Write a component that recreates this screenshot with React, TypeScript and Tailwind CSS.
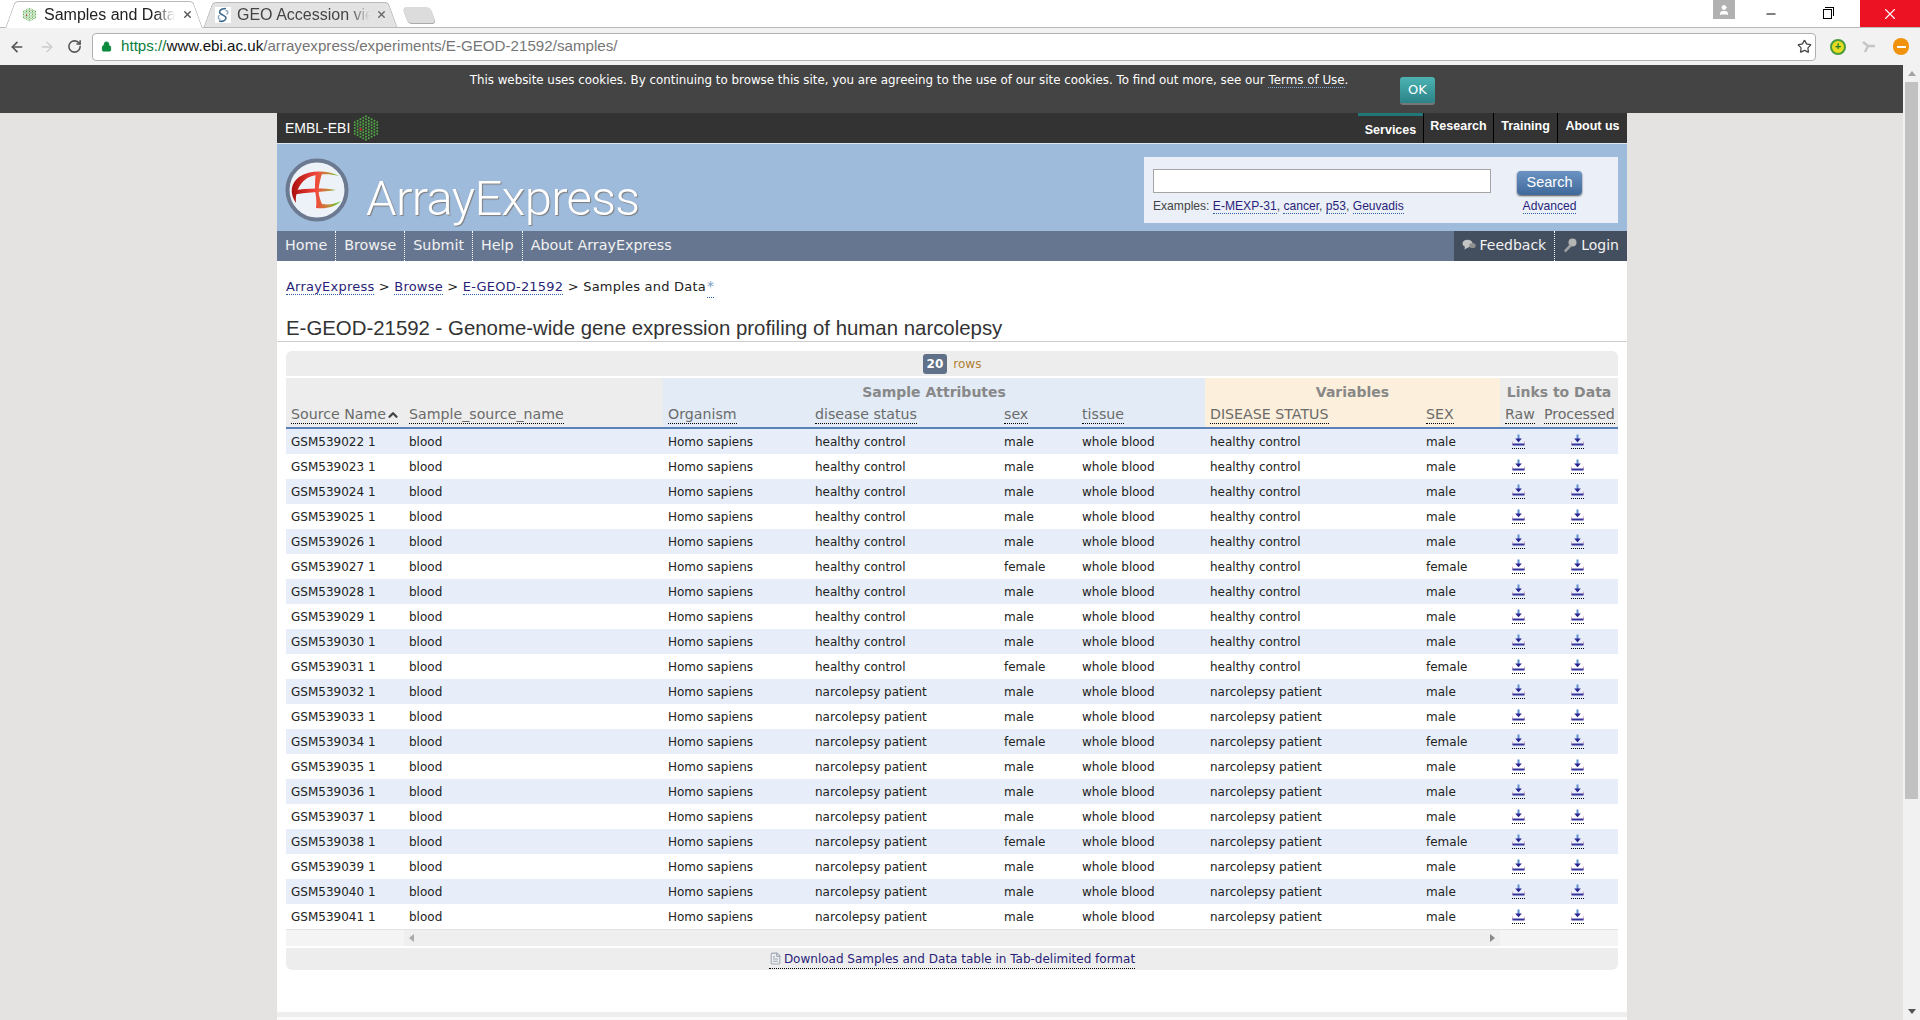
import { ChevronUp, ArrowLeft, ArrowRight, RotateCw, Lock, Star, Minus, X, User, FileText } from "lucide-react"

const verdana = "font-['DejaVu_Sans',Verdana,sans-serif]"
const arial = "font-['Liberation_Sans',Arial,sans-serif]"

interface Sample {
  id: number
  status: string
  sex: string
}

const femaleIds = [539027, 539031, 539034, 539038]

const samples: Sample[] = Array.from({ length: 20 }, (_, i) => {
  const id = 539022 + i
  return {
    id,
    status: i < 10 ? "healthy control" : "narcolepsy patient",
    sex: femaleIds.includes(id) ? "female" : "male",
  }
})

function HexLogo({ size = 26 }: { size?: number }) {
  const dots: [number, number][] = []
  for (let c = -4; c <= 4; c++) {
    const n = 9 - Math.abs(c)
    for (let r = 0; r < n; r++) {
      dots.push([13 + c * 2.6, 13 + (r - (n - 1) / 2) * 2.7])
    }
  }
  return (
    <svg width={size} height={size} viewBox="0 0 26 26">
      {dots.map(([x, y], i) => (
        <circle key={i} cx={x} cy={y} r="0.95" fill="#52a544" />
      ))}
      <circle cx="8" cy="14.4" r="1.1" fill="#d2142a" />
    </svg>
  )
}

function AeLogo() {
  return (
    <svg width="64" height="64" viewBox="0 0 64 64">
      <defs>
        <linearGradient id="ae" gradientUnits="userSpaceOnUse" x1="6" x2="56" y1="0" y2="0">
          <stop offset="0" stopColor="#a80c0c" />
          <stop offset="0.5" stopColor="#f2463a" />
          <stop offset="0.78" stopColor="#b8963a" />
          <stop offset="1" stopColor="#3fd21c" />
        </linearGradient>
      </defs>
      <circle cx="32" cy="32" r="29.5" fill="#edf2f9" stroke="#6b7a90" strokeWidth="4" />
      <path d="M11 45 C4 35 6 25 14 19 C25 12 42 12 54 18 C42 15 28 16 21 21 C14 26 10 35 11 45 Z" fill="url(#ae)" />
      <path d="M8 33 C20 30 38 30 51 32 C38 34 20 34 8 37 Z" fill="url(#ae)" />
      <path d="M31 15 L37 16 C35 22 33 30 34 37 C35 41 36 44 37 46 C44 47 50 46 56 43 C50 49 42 51 31 50 C32 44 31 38 30 32 C30 26 30 20 31 15 Z" fill="url(#ae)" />
    </svg>
  )
}

function GeoIcon() {
  return (
    <svg width="16" height="16" viewBox="0 0 16 16" className="shrink-0 bg-white">
      <path d="M11 1.5 C5 1.5 3 5 6 7 C9 9 13 10 10 13 C8.5 14.5 6 14.5 4 14" fill="none" stroke="#3f6b8f" strokeWidth="1.6" />
      <path d="M4.5 8 C2.5 10 3 12.5 5.5 12 M11.5 7.5 C13.5 6 13.5 3.5 10.5 3.5" fill="none" stroke="#8aa6bc" strokeWidth="1.3" />
    </svg>
  )
}

function DownloadIcon() {
  return (
    <a className="inline-block border-b border-dotted border-black pb-[2px] leading-none">
      <svg width="13" height="12" viewBox="0 0 13 12" className="block">
        <path d="M6.5 0.5 V6" stroke="#5b8fd0" strokeWidth="2" />
        <path d="M3.2 4.4 H9.8 L6.5 8.2 Z" fill="#2a2390" />
        <path d="M0.5 7.5 V10.5 H12.5 V7.5" fill="none" stroke="#d9b0c0" strokeWidth="1" />
        <path d="M0.5 10.5 H12.5" stroke="#34339a" strokeWidth="2" />
      </svg>
    </a>
  )
}

function Th({ children }: { children: string }) {
  return (
    <span className="border-b border-dotted border-black pb-px text-[#6b6b6b]">{children}</span>
  )
}

function DottedLink({ children }: { children: string }) {
  return <a className="border-b border-dotted border-[#2f5fa8] text-[#2a1f78]">{children}</a>
}

function TabShape({ bg }: { bg: string }) {
  return (
    <>
      <div className={`absolute inset-y-0 left-[6px] w-[60%] -skew-x-[20deg] rounded-tl-sm border-l border-t border-[#b9b9b9] ${bg}`} />
      <div className={`absolute inset-y-0 right-[6px] w-[60%] skew-x-[20deg] rounded-tr-sm border-r border-t border-[#b9b9b9] ${bg}`} />
    </>
  )
}

function BrowserChrome() {
  return (
    <div className={`${arial} bg-white`}>
      <div className="flex h-[28px] items-end border-b border-[#b9b9b9] pl-[4px]">
        <div className="relative z-10 mb-[-1px] h-[27px] w-[200px] shrink-0">
          <TabShape bg="bg-white" />
          <div className="relative flex h-full items-center gap-[7px] pl-[18px] pr-[11px] text-[16px] text-[#222]">
            <HexLogo size={15} />
            <span className="flex-1 overflow-hidden whitespace-nowrap [mask-image:linear-gradient(to_right,black_85%,transparent)]">Samples and Data</span>
            <X size={11} strokeWidth={3} className="shrink-0 text-[#555]" />
          </div>
        </div>
        <div className="relative -ml-[2px] h-[25px] w-[197px] shrink-0">
          <TabShape bg="bg-[#e3e3e3]" />
          <div className="relative flex h-full items-center gap-[6px] pl-[13px] pr-[12px] text-[16px] text-[#444]">
            <GeoIcon />
            <span className="flex-1 overflow-hidden whitespace-nowrap [mask-image:linear-gradient(to_right,black_85%,transparent)]">GEO Accession viewer</span>
            <X size={11} strokeWidth={3} className="shrink-0 text-[#666]" />
          </div>
        </div>
        <div className="mb-[4px] ml-[6px] h-[16px] w-[28px] skew-x-[20deg] rounded-sm bg-[#dcdcdc] shadow-[0_1px_0_#aaa]" />
        <div className="flex-1" />
        <div className="mr-[13px] flex h-[19px] w-[22px] items-center justify-center self-start bg-[#b1b1b1]">
          <User size={12} fill="white" className="text-white" />
        </div>
        <div className="flex self-start">
          <div className="flex h-[27px] w-[46px] items-center justify-center"><Minus size={14} /></div>
          <div className="ml-[10px] flex h-[27px] w-[46px] items-center justify-center text-[#111]">
            <div className="relative h-[10px] w-[9px] border border-black bg-white after:absolute after:-right-[3px] after:-top-[3px] after:h-[9px] after:w-[9px] after:border-r after:border-t after:border-black" />
          </div>
          <div className="ml-[10px] flex h-[27px] w-[60px] items-center justify-center bg-[#ec1224]"><X size={18} strokeWidth={1.5} className="text-white" /></div>
        </div>
      </div>
      <div className="flex h-[37px] items-center bg-[#f2f2f2]">
        <ArrowLeft size={16} strokeWidth={2.5} className="ml-[9px] text-[#555]" />
        <ArrowRight size={16} strokeWidth={2} className="ml-[14px] text-[#ccc]" />
        <RotateCw size={15} strokeWidth={2.5} className="ml-[12px] text-[#555]" />
        <div className="ml-[10px] flex h-[28px] w-[1724px] items-center rounded-sm border border-[#b0b0b0] bg-white pl-[8px] pr-[3px] text-[15.15px]">
          <Lock size={11} fill="#0b8a3e" className="mr-[9px] text-[#0b8a3e]" />
          <span className="text-[#0b7d3a]">https://</span>
          <span className="text-[#111]">www.ebi.ac.uk</span>
          <span className="text-[#767676]">/arrayexpress/experiments/E-GEOD-21592/samples/</span>
          <Star size={15} strokeWidth={2} className="ml-auto text-[#444]" />
        </div>
        <div className="ml-[14px] flex h-[16px] w-[16px] items-center justify-center rounded-full border-2 border-[#4a9b3d] bg-[#e6dc21] text-[11px] font-bold leading-none text-[#277a2b]">+</div>
        <svg width="14" height="12" viewBox="0 0 14 12" className="ml-[16px]">
          <path d="M1 1 L6 5 L13 5 M6 5 L3 11" fill="none" stroke="#c5c5c5" strokeWidth="2.4" />
        </svg>
        <div className="ml-[17px] flex h-[17px] w-[16px] items-center justify-center rounded-full bg-[#f0930b]"><div className="h-[2px] w-[9px] bg-white" /></div>
      </div>
    </div>
  )
}

function CookieBar() {
  return (
    <div className={`${verdana} relative flex h-[48px] shrink-0 justify-center bg-[#444] pt-[7px] text-[11.87px] text-white`}>
      <p className="mr-[85px]">
        This website uses cookies. By continuing to browse this site, you are agreeing to the use of our site cookies. To find out more, see our{" "}
        <a className="border-b border-dotted border-[#7fa7d8]">Terms of Use</a>.
      </p>
      <button className="absolute left-[1400px] top-[12px] h-[28px] w-[35px] rounded-[3px] border-b-2 border-[#777] bg-gradient-to-b from-[#4db3b3] to-[#2b8488] text-[13px]">OK</button>
    </div>
  )
}

function Masthead() {
  return (
    <>
      <div className={`${arial} flex h-[30px] items-stretch bg-[#333] text-white`}>
        <div className="flex items-center gap-[2px] pl-[8px] text-[14px]">
          EMBL-EBI <HexLogo size={28} />
        </div>
        <div className="ml-auto flex text-[12.5px] font-bold">
          <div className="flex w-[65px] items-end justify-center border-t-[3px] border-[#1f7778] pb-[3px]">Services</div>
          <div className="flex w-[70px] items-center justify-center border-l border-black pb-[3px]">Research</div>
          <div className="flex w-[64px] items-center justify-center border-l border-black pb-[3px]">Training</div>
          <div className="flex w-[70px] items-center justify-center border-l border-black pb-[3px]">About us</div>
        </div>
      </div>
      <div className="flex h-[88px] border-t border-[#dfe8f2] bg-[#9fbbdc]">
        <div className="ml-[8px] mt-[14px]"><AeLogo /></div>
        <div className="ml-[17px] mt-[27px] font-['Roboto',Arial,sans-serif] text-[49px] font-light leading-[55px] tracking-[-0.7px] text-white [text-shadow:1px_1px_1px_#7c7c7c]">ArrayExpress</div>
        <div className={`${arial} ml-auto mr-[9px] mt-[13px] flex h-[66px] w-[474px] bg-[#ebf0f8] pl-[9px] text-[12.1px]`}>
          <div>
            <div className="mt-[12px] h-[24px] w-[338px] border border-[#a5a5a5] bg-white" />
            <div className="mt-[4px] text-[#444]">
              Examples: <DottedLink>E-MEXP-31</DottedLink>, <DottedLink>cancer</DottedLink>, <DottedLink>p53</DottedLink>, <DottedLink>Geuvadis</DottedLink>
            </div>
          </div>
          <div className="ml-[26px] flex flex-col items-center">
            <button className="mt-[14px] h-[24px] w-[65px] rounded-[4px] bg-gradient-to-b from-[#6b93c2] to-[#40699b] text-[14.5px] text-white shadow-[0_1px_2px_#555]">Search</button>
            <div className="mt-[2px]"><DottedLink>Advanced</DottedLink></div>
          </div>
        </div>
      </div>
      <div className={`${verdana} flex h-[30px] items-stretch bg-[#667690] text-[14.3px] text-[#f2f2f2]`}>
        {["Home", "Browse", "Submit", "Help", "About ArrayExpress"].map((item, i, all) => (
          <div key={item} className={`flex items-center px-[8px] ${i < all.length - 1 ? "border-r border-dotted border-white" : ""}`}>{item}</div>
        ))}
        <div className="ml-auto flex bg-[#434e5e] text-[14px]">
          <div className="flex items-center gap-[4px] border-r border-dotted border-white px-[8px] pb-[2px]">
            <svg width="14" height="12" viewBox="0 0 14 12">
              <ellipse cx="5.5" cy="4.5" rx="5" ry="3.8" fill="#c4c4c4" />
              <ellipse cx="10.5" cy="6.5" rx="3.2" ry="2.6" fill="#8f8f8f" />
              <path d="M3 7 L2.5 10.5 L7 8 Z" fill="#c4c4c4" />
            </svg>
            Feedback
          </div>
          <div className="flex items-center gap-[4px] px-[8px] pb-[2px]">
            <svg width="14" height="15" viewBox="0 0 14 15">
              <circle cx="9.5" cy="4.5" r="4" fill="#b5b5b5" />
              <path d="M7 6 L1 12.5 L2.5 14.5 L9 8 Z" fill="#a0a0a0" />
            </svg>
            Login
          </div>
        </div>
      </div>
    </>
  )
}

function SamplesTable() {
  return (
    <div className={`${verdana} mx-[9px] text-[12px] text-[#222]`}>
      <div className="flex h-[25px] items-center justify-center gap-[6px] rounded-t-md bg-[#ededed]">
        <span className="rounded-[3px] bg-[#5f7088] px-[4px] py-[1px] font-bold text-white">20</span>
        <span className="text-[#b07f33]">rows</span>
      </div>
      <table className="mt-[2px] w-full table-fixed border-collapse">
        <colgroup>
          <col className="w-[118px]" />
          <col className="w-[259px]" />
          <col className="w-[147px]" />
          <col className="w-[189px]" />
          <col className="w-[78px]" />
          <col className="w-[128px]" />
          <col className="w-[216px]" />
          <col className="w-[79px]" />
          <col className="w-[39px]" />
          <col className="w-[79px]" />
        </colgroup>
        <thead>
          <tr className="h-[25px] text-[14px] font-bold text-[#888]">
            <th colSpan={2} className="bg-[#ededed]" />
            <th colSpan={4} className="bg-[#e2ebf6] pt-[3px]">Sample Attributes</th>
            <th colSpan={2} className="bg-[#fcefdb] pt-[3px]">Variables</th>
            <th colSpan={2} className="bg-[#ededed] pt-[3px]">Links to Data</th>
          </tr>
          <tr className="h-[25px] border-b-2 border-[#5a82b8] text-left text-[14.2px] font-normal">
            <th className="whitespace-nowrap bg-[#ededed] pl-[5px] font-normal">
              <span className="border-b border-dotted border-black pb-px text-[#6b6b6b]">
                Source Name<ChevronUp size={14} strokeWidth={4} className="-mr-[2px] inline-block text-[#444]" />
              </span>
            </th>
            <th className="bg-[#ededed] pl-[5px] font-normal"><Th>Sample_source_name</Th></th>
            <th className="bg-[#e2ebf6] pl-[5px] font-normal"><Th>Organism</Th></th>
            <th className="bg-[#e2ebf6] pl-[5px] font-normal"><Th>disease status</Th></th>
            <th className="bg-[#e2ebf6] pl-[5px] font-normal"><Th>sex</Th></th>
            <th className="bg-[#e2ebf6] pl-[5px] font-normal"><Th>tissue</Th></th>
            <th className="bg-[#fcefdb] pl-[5px] font-normal"><Th>DISEASE STATUS</Th></th>
            <th className="bg-[#fcefdb] pl-[5px] font-normal"><Th>SEX</Th></th>
            <th className="bg-[#ededed] pl-[5px] font-normal"><Th>Raw</Th></th>
            <th className="whitespace-nowrap bg-[#ededed] pl-[5px] font-normal tracking-[-0.1px]"><Th>Processed</Th></th>
          </tr>
        </thead>
        <tbody>
          {samples.map((s, i) => (
            <tr key={s.id} className={`h-[25px] ${i % 2 === 0 ? "bg-[#e7eefa]" : "bg-white"}`}>
              <td className="pl-[5px] whitespace-nowrap">GSM{s.id} 1</td>
              <td className="pl-[5px]">blood</td>
              <td className="pl-[5px]">Homo sapiens</td>
              <td className="pl-[5px]">{s.status}</td>
              <td className="pl-[5px]">{s.sex}</td>
              <td className="pl-[5px]">whole blood</td>
              <td className="pl-[5px]">{s.status}</td>
              <td className="pl-[5px]">{s.sex}</td>
              <td className="pl-[12px] pt-[5px]"><DownloadIcon /></td>
              <td className="pl-[32px] pt-[5px]"><DownloadIcon /></td>
            </tr>
          ))}
        </tbody>
      </table>
      <div className="flex h-[17px] items-stretch border-t border-[#e3e3e3] bg-[#f4f4f4]">
        <div className="w-[118px]" />
        <div className="flex w-[1096px] items-center justify-between bg-[#efefef] px-[5px]">
          <div className="h-0 w-0 border-y-[4px] border-r-[5px] border-y-transparent border-r-[#aaa]" />
          <div className="h-0 w-0 border-y-[4px] border-l-[5px] border-y-transparent border-l-[#888]" />
        </div>
      </div>
      <div className="mt-[2px] flex h-[22px] items-center justify-center rounded-b-md bg-[#ededed]">
        <a className="flex items-center border-b border-dotted border-black text-[#2a1f78]">
          <FileText size={13} className="mr-[2px] text-[#a0a8b5]" />
          Download Samples and Data table in Tab-delimited format
        </a>
      </div>
    </div>
  )
}

export default function App() {
  return (
    <div className="flex h-[1020px] flex-col overflow-hidden bg-[#e4e3e1]">
      <BrowserChrome />
      <div className="flex min-h-0 flex-1">
        <div className="flex min-w-0 flex-1 flex-col">
          <CookieBar />
          <div className="ml-[277px] flex w-[1350px] flex-1 flex-col bg-white">
            <Masthead />
            <div className={`${verdana} mt-[16px] px-[9px] text-[13px] tracking-[0.22px] text-[#222]`}>
              <DottedLink>ArrayExpress</DottedLink> &gt; <DottedLink>Browse</DottedLink> &gt; <DottedLink>E-GEOD-21592</DottedLink> &gt; Samples and Data
              <span className="ml-[1px] inline-block h-[12px] w-[7px] border-b border-dotted border-[#2f5fa8] text-[14px] leading-[0px] text-[#7a9cc6]">*</span>
            </div>
            <h1 className={`${arial} mt-[18px] h-[26px] border-b border-[#ccc] pl-[9px] text-[20.4px] leading-[24px] text-[#333]`}>
              E-GEOD-21592 - Genome-wide gene expression profiling of human narcolepsy
            </h1>
            <div className="mt-[9px]"><SamplesTable /></div>
            <div className="mt-[42px] h-[5px] bg-[#eee]" />
            <div className="flex-1 bg-[#fafafa]" />
          </div>
        </div>
        <div className="flex w-[17px] flex-col items-center bg-[#f1f1f1]">
          <div className="mt-[6px] h-0 w-0 border-x-[4px] border-b-[5px] border-x-transparent border-b-[#a3a3a3]" />
          <div className="mt-[6px] h-[717px] w-[13px] bg-[#c1c1c1]" />
          <div className="mb-[6px] mt-auto h-0 w-0 border-x-[4px] border-t-[5px] border-x-transparent border-t-[#555]" />
        </div>
      </div>
    </div>
  )
}
